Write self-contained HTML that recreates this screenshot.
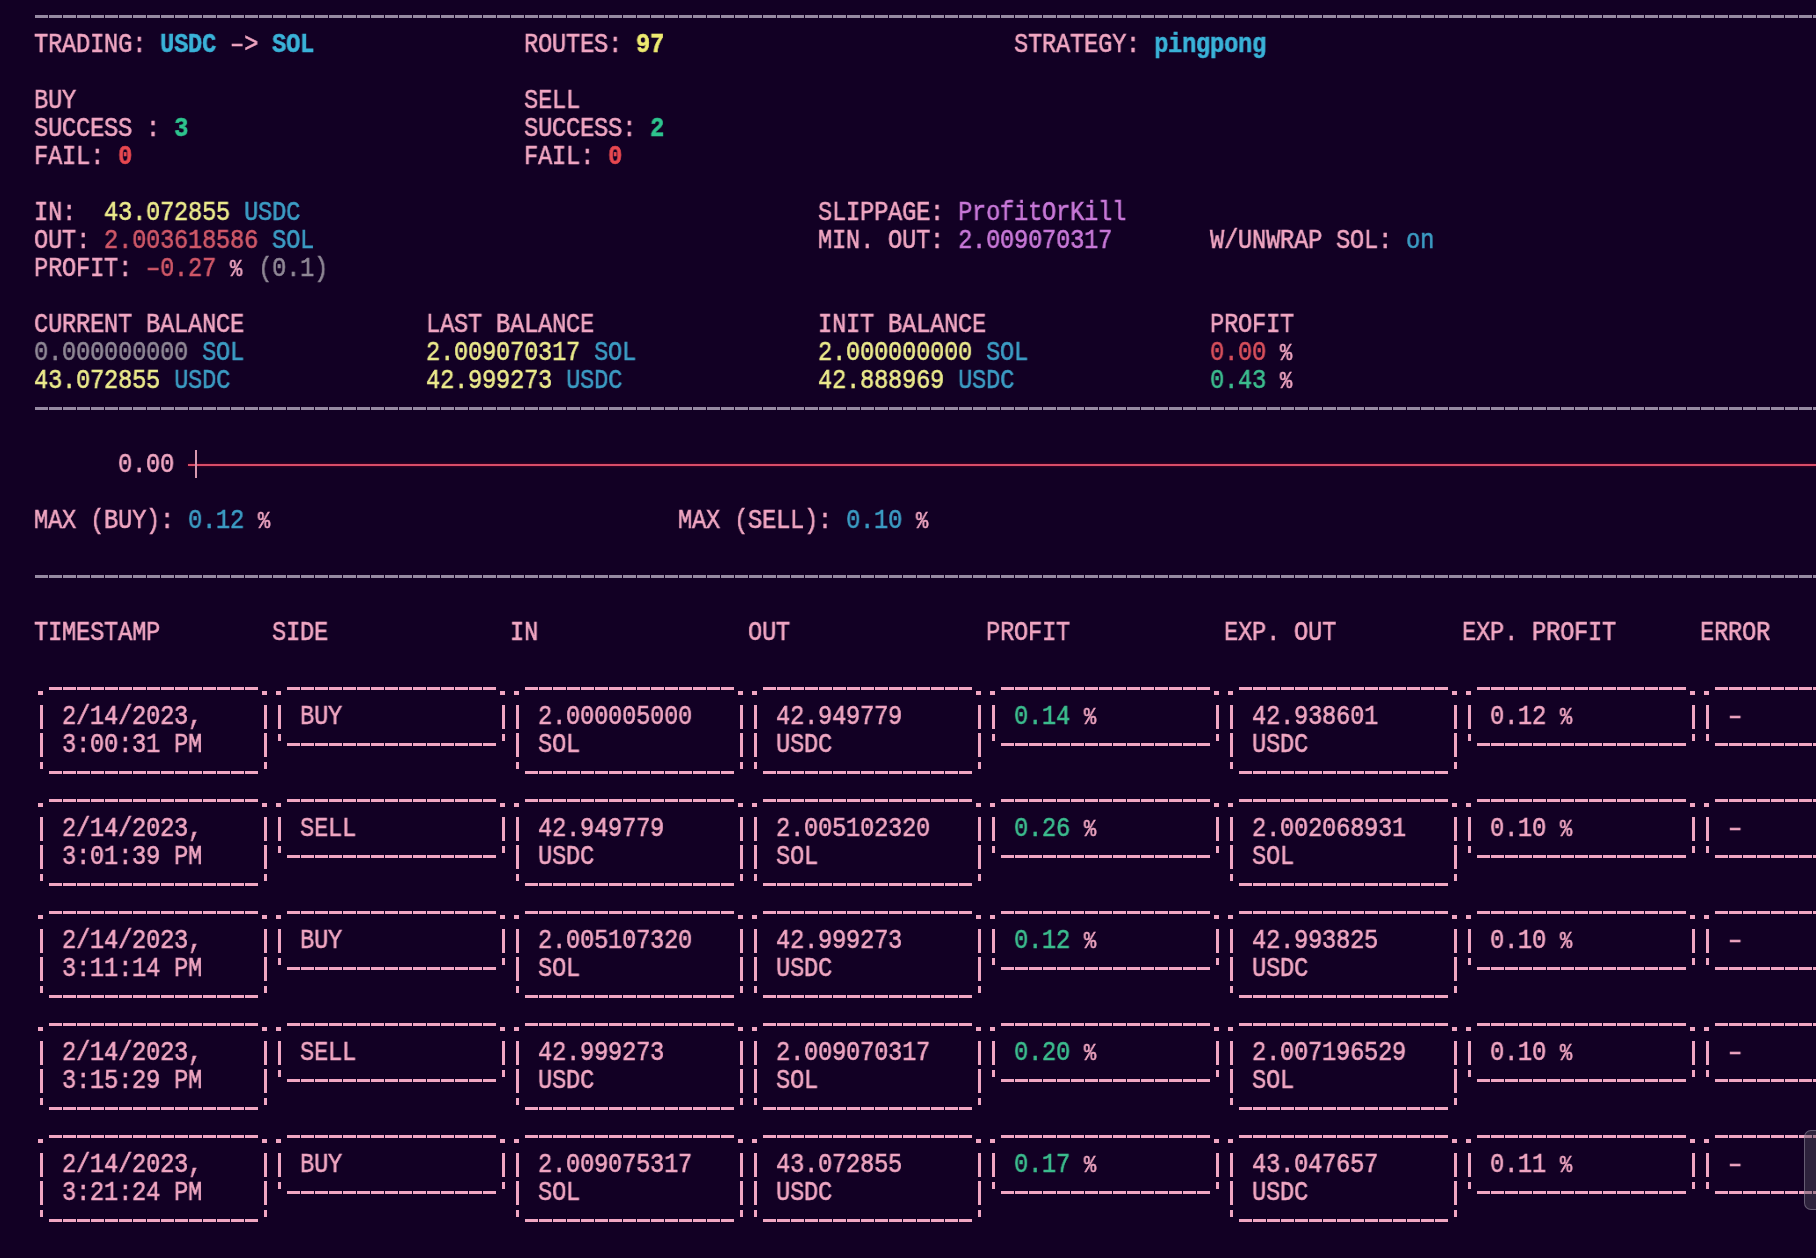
<!DOCTYPE html>
<html><head><meta charset="utf-8"><title>terminal</title><style>
html,body{margin:0;padding:0;}
body{width:1816px;height:1258px;overflow:hidden;position:relative;background:#120024;
 font-family:"Liberation Mono",monospace;font-size:27px;line-height:28px;color:#f0a6c2;
 --bx:#f0a6c2; --ln:#c0607a; --ax:#d898b0;}
.t{position:absolute;white-space:pre;letter-spacing:-0.291px;-webkit-text-stroke:0.55px currentColor;transform:scaleX(0.88);transform-origin:0 0;will-change:transform;}
.pc{font-size:23px;letter-spacing:2.109px;}
.rc{position:absolute;}
.d{position:absolute;height:3px;background-size:14px 3px;background-repeat:repeat-x;}
.pd{background-image:linear-gradient(90deg,#f0a6c2 0,#f0a6c2 13px,transparent 13px);}
.gd{background-image:linear-gradient(90deg,#968aa2 0,#968aa2 13px,transparent 13px);}
.p{color:#f0a6c2;}
.g{color:#968aa2;}
.cb{color:#3ab2d8;font-weight:bold;}
.b{color:#3c9cc4;}
.yb{color:#eeea70;font-weight:bold;}
.y{color:#ecea8c;}
.gb{color:#2ec48e;font-weight:bold;}
.gr{color:#3cbc8e;}
.rb{color:#e84850;font-weight:bold;}
.r{color:#d05868;}
.gy{color:#908896;}
.pu{color:#c878d8;}
.rb2{color:#d8505c;}
</style></head>
<body>
<div class="d gd" style="top:15px;left:35px;width:1792px"></div>
<div class="t" style="top:31.10px;left:33.90px">TRADING: <span class="cb">USDC</span> –&gt; <span class="cb">SOL</span></div>
<div class="t" style="top:31.10px;left:523.90px">ROUTES: <span class="yb">97</span></div>
<div class="t" style="top:31.10px;left:1013.90px">STRATEGY: <span class="cb">pingpong</span></div>
<div class="t" style="top:87.10px;left:33.90px">BUY</div>
<div class="t" style="top:87.10px;left:523.90px">SELL</div>
<div class="t" style="top:115.10px;left:33.90px">SUCCESS : <span class="gb">3</span></div>
<div class="t" style="top:115.10px;left:523.90px">SUCCESS: <span class="gb">2</span></div>
<div class="t" style="top:143.10px;left:33.90px">FAIL: <span class="rb">0</span></div>
<div class="t" style="top:143.10px;left:523.90px">FAIL: <span class="rb">0</span></div>
<div class="t" style="top:199.10px;left:33.90px">IN:  <span class="y">43.072855</span> <span class="b">USDC</span></div>
<div class="t" style="top:199.10px;left:817.90px">SLIPPAGE: <span class="pu">ProfitOrKill</span></div>
<div class="t" style="top:227.10px;left:33.90px">OUT: <span class="r">2.003618586</span> <span class="b">SOL</span></div>
<div class="t" style="top:227.10px;left:817.90px">MIN. OUT: <span class="pu">2.009070317</span></div>
<div class="t" style="top:227.10px;left:1209.90px">W/UNWRAP SOL: <span class="b">on</span></div>
<div class="t" style="top:255.10px;left:33.90px">PROFIT: <span class="r">–0.27</span> <span class="pc">%</span> <span class="gy">(0.1)</span></div>
<div class="t" style="top:311.10px;left:33.90px">CURRENT BALANCE</div>
<div class="t" style="top:311.10px;left:425.90px">LAST BALANCE</div>
<div class="t" style="top:311.10px;left:817.90px">INIT BALANCE</div>
<div class="t" style="top:311.10px;left:1209.90px">PROFIT</div>
<div class="t" style="top:339.10px;left:33.90px"><span class="gy">0.000000000</span> <span class="b">SOL</span></div>
<div class="t" style="top:339.10px;left:425.90px"><span class="y">2.009070317</span> <span class="b">SOL</span></div>
<div class="t" style="top:339.10px;left:817.90px"><span class="y">2.000000000</span> <span class="b">SOL</span></div>
<div class="t" style="top:339.10px;left:1209.90px"><span class="rb2">0.00</span> <span class="pc">%</span></div>
<div class="t" style="top:367.10px;left:33.90px"><span class="y">43.072855</span> <span class="b">USDC</span></div>
<div class="t" style="top:367.10px;left:425.90px"><span class="y">42.999273</span> <span class="b">USDC</span></div>
<div class="t" style="top:367.10px;left:817.90px"><span class="y">42.888969</span> <span class="b">USDC</span></div>
<div class="t" style="top:367.10px;left:1209.90px"><span class="gr">0.43</span> <span class="pc">%</span></div>
<div class="d gd" style="top:407px;left:35px;width:1792px"></div>
<div class="t" style="top:451.10px;left:117.90px">0.00</div>
<div class="rc" style="left:188px;top:464px;width:1628px;height:2px;background:#d84c68;box-shadow:0 0 3px rgba(160,0,30,0.6)"></div>
<div class="rc" style="left:194.5px;top:450px;width:2.5px;height:28px;background:var(--ax)"></div>
<div class="t" style="top:507.10px;left:33.90px">MAX (BUY): <span class="b">0.12</span> <span class="pc">%</span></div>
<div class="t" style="top:507.10px;left:677.90px">MAX (SELL): <span class="b">0.10</span> <span class="pc">%</span></div>
<div class="d gd" style="top:575px;left:35px;width:1792px"></div>
<div class="t" style="top:619.10px;left:33.90px">TIMESTAMP</div>
<div class="t" style="top:619.10px;left:271.90px">SIDE</div>
<div class="t" style="top:619.10px;left:509.90px">IN</div>
<div class="t" style="top:619.10px;left:747.90px">OUT</div>
<div class="t" style="top:619.10px;left:985.90px">PROFIT</div>
<div class="t" style="top:619.10px;left:1223.90px">EXP. OUT</div>
<div class="t" style="top:619.10px;left:1461.90px">EXP. PROFIT</div>
<div class="t" style="top:619.10px;left:1699.90px">ERROR</div>
<div class="d pd" style="top:687px;left:49px;width:210px"></div>
<div class="rc" style="left:38px;top:691px;width:5px;height:4px;background:var(--bx)"></div>
<div class="rc" style="left:262px;top:691px;width:5px;height:4px;background:var(--bx)"></div>
<div class="rc" style="left:40px;top:705px;width:3px;height:24px;background:var(--bx)"></div>
<div class="rc" style="left:264px;top:705px;width:3px;height:24px;background:var(--bx)"></div>
<div class="rc" style="left:40px;top:733px;width:3px;height:24px;background:var(--bx)"></div>
<div class="rc" style="left:264px;top:733px;width:3px;height:24px;background:var(--bx)"></div>
<div class="d pd" style="top:771px;left:49px;width:210px"></div>
<div class="rc" style="left:40px;top:762px;width:3px;height:7px;background:var(--bx)"></div>
<div class="rc" style="left:264px;top:762px;width:3px;height:7px;background:var(--bx)"></div>
<div class="t" style="top:703.10px;left:61.90px">2/14/2023,</div>
<div class="t" style="top:731.10px;left:61.90px">3:00:31 PM</div>
<div class="d pd" style="top:687px;left:287px;width:210px"></div>
<div class="rc" style="left:276px;top:691px;width:5px;height:4px;background:var(--bx)"></div>
<div class="rc" style="left:500px;top:691px;width:5px;height:4px;background:var(--bx)"></div>
<div class="rc" style="left:278px;top:705px;width:3px;height:24px;background:var(--bx)"></div>
<div class="rc" style="left:502px;top:705px;width:3px;height:24px;background:var(--bx)"></div>
<div class="d pd" style="top:743px;left:287px;width:210px"></div>
<div class="rc" style="left:278px;top:734px;width:3px;height:7px;background:var(--bx)"></div>
<div class="rc" style="left:502px;top:734px;width:3px;height:7px;background:var(--bx)"></div>
<div class="t" style="top:703.10px;left:299.90px">BUY</div>
<div class="d pd" style="top:687px;left:525px;width:210px"></div>
<div class="rc" style="left:514px;top:691px;width:5px;height:4px;background:var(--bx)"></div>
<div class="rc" style="left:738px;top:691px;width:5px;height:4px;background:var(--bx)"></div>
<div class="rc" style="left:516px;top:705px;width:3px;height:24px;background:var(--bx)"></div>
<div class="rc" style="left:740px;top:705px;width:3px;height:24px;background:var(--bx)"></div>
<div class="rc" style="left:516px;top:733px;width:3px;height:24px;background:var(--bx)"></div>
<div class="rc" style="left:740px;top:733px;width:3px;height:24px;background:var(--bx)"></div>
<div class="d pd" style="top:771px;left:525px;width:210px"></div>
<div class="rc" style="left:516px;top:762px;width:3px;height:7px;background:var(--bx)"></div>
<div class="rc" style="left:740px;top:762px;width:3px;height:7px;background:var(--bx)"></div>
<div class="t" style="top:703.10px;left:537.90px">2.000005000</div>
<div class="t" style="top:731.10px;left:537.90px">SOL</div>
<div class="d pd" style="top:687px;left:763px;width:210px"></div>
<div class="rc" style="left:752px;top:691px;width:5px;height:4px;background:var(--bx)"></div>
<div class="rc" style="left:976px;top:691px;width:5px;height:4px;background:var(--bx)"></div>
<div class="rc" style="left:754px;top:705px;width:3px;height:24px;background:var(--bx)"></div>
<div class="rc" style="left:978px;top:705px;width:3px;height:24px;background:var(--bx)"></div>
<div class="rc" style="left:754px;top:733px;width:3px;height:24px;background:var(--bx)"></div>
<div class="rc" style="left:978px;top:733px;width:3px;height:24px;background:var(--bx)"></div>
<div class="d pd" style="top:771px;left:763px;width:210px"></div>
<div class="rc" style="left:754px;top:762px;width:3px;height:7px;background:var(--bx)"></div>
<div class="rc" style="left:978px;top:762px;width:3px;height:7px;background:var(--bx)"></div>
<div class="t" style="top:703.10px;left:775.90px">42.949779</div>
<div class="t" style="top:731.10px;left:775.90px">USDC</div>
<div class="d pd" style="top:687px;left:1001px;width:210px"></div>
<div class="rc" style="left:990px;top:691px;width:5px;height:4px;background:var(--bx)"></div>
<div class="rc" style="left:1214px;top:691px;width:5px;height:4px;background:var(--bx)"></div>
<div class="rc" style="left:992px;top:705px;width:3px;height:24px;background:var(--bx)"></div>
<div class="rc" style="left:1216px;top:705px;width:3px;height:24px;background:var(--bx)"></div>
<div class="d pd" style="top:743px;left:1001px;width:210px"></div>
<div class="rc" style="left:992px;top:734px;width:3px;height:7px;background:var(--bx)"></div>
<div class="rc" style="left:1216px;top:734px;width:3px;height:7px;background:var(--bx)"></div>
<div class="t" style="top:703.10px;left:1013.90px"><span class="gr">0.14</span> <span class="pc">%</span></div>
<div class="d pd" style="top:687px;left:1239px;width:210px"></div>
<div class="rc" style="left:1228px;top:691px;width:5px;height:4px;background:var(--bx)"></div>
<div class="rc" style="left:1452px;top:691px;width:5px;height:4px;background:var(--bx)"></div>
<div class="rc" style="left:1230px;top:705px;width:3px;height:24px;background:var(--bx)"></div>
<div class="rc" style="left:1454px;top:705px;width:3px;height:24px;background:var(--bx)"></div>
<div class="rc" style="left:1230px;top:733px;width:3px;height:24px;background:var(--bx)"></div>
<div class="rc" style="left:1454px;top:733px;width:3px;height:24px;background:var(--bx)"></div>
<div class="d pd" style="top:771px;left:1239px;width:210px"></div>
<div class="rc" style="left:1230px;top:762px;width:3px;height:7px;background:var(--bx)"></div>
<div class="rc" style="left:1454px;top:762px;width:3px;height:7px;background:var(--bx)"></div>
<div class="t" style="top:703.10px;left:1251.90px">42.938601</div>
<div class="t" style="top:731.10px;left:1251.90px">USDC</div>
<div class="d pd" style="top:687px;left:1477px;width:210px"></div>
<div class="rc" style="left:1466px;top:691px;width:5px;height:4px;background:var(--bx)"></div>
<div class="rc" style="left:1690px;top:691px;width:5px;height:4px;background:var(--bx)"></div>
<div class="rc" style="left:1468px;top:705px;width:3px;height:24px;background:var(--bx)"></div>
<div class="rc" style="left:1692px;top:705px;width:3px;height:24px;background:var(--bx)"></div>
<div class="d pd" style="top:743px;left:1477px;width:210px"></div>
<div class="rc" style="left:1468px;top:734px;width:3px;height:7px;background:var(--bx)"></div>
<div class="rc" style="left:1692px;top:734px;width:3px;height:7px;background:var(--bx)"></div>
<div class="t" style="top:703.10px;left:1489.90px">0.12 <span class="pc">%</span></div>
<div class="d pd" style="top:687px;left:1715px;width:210px"></div>
<div class="rc" style="left:1704px;top:691px;width:5px;height:4px;background:var(--bx)"></div>
<div class="rc" style="left:1928px;top:691px;width:5px;height:4px;background:var(--bx)"></div>
<div class="rc" style="left:1706px;top:705px;width:3px;height:24px;background:var(--bx)"></div>
<div class="rc" style="left:1930px;top:705px;width:3px;height:24px;background:var(--bx)"></div>
<div class="d pd" style="top:743px;left:1715px;width:210px"></div>
<div class="rc" style="left:1706px;top:734px;width:3px;height:7px;background:var(--bx)"></div>
<div class="rc" style="left:1930px;top:734px;width:3px;height:7px;background:var(--bx)"></div>
<div class="t" style="top:703.10px;left:1727.90px">–</div>
<div class="d pd" style="top:799px;left:49px;width:210px"></div>
<div class="rc" style="left:38px;top:803px;width:5px;height:4px;background:var(--bx)"></div>
<div class="rc" style="left:262px;top:803px;width:5px;height:4px;background:var(--bx)"></div>
<div class="rc" style="left:40px;top:817px;width:3px;height:24px;background:var(--bx)"></div>
<div class="rc" style="left:264px;top:817px;width:3px;height:24px;background:var(--bx)"></div>
<div class="rc" style="left:40px;top:845px;width:3px;height:24px;background:var(--bx)"></div>
<div class="rc" style="left:264px;top:845px;width:3px;height:24px;background:var(--bx)"></div>
<div class="d pd" style="top:883px;left:49px;width:210px"></div>
<div class="rc" style="left:40px;top:874px;width:3px;height:7px;background:var(--bx)"></div>
<div class="rc" style="left:264px;top:874px;width:3px;height:7px;background:var(--bx)"></div>
<div class="t" style="top:815.10px;left:61.90px">2/14/2023,</div>
<div class="t" style="top:843.10px;left:61.90px">3:01:39 PM</div>
<div class="d pd" style="top:799px;left:287px;width:210px"></div>
<div class="rc" style="left:276px;top:803px;width:5px;height:4px;background:var(--bx)"></div>
<div class="rc" style="left:500px;top:803px;width:5px;height:4px;background:var(--bx)"></div>
<div class="rc" style="left:278px;top:817px;width:3px;height:24px;background:var(--bx)"></div>
<div class="rc" style="left:502px;top:817px;width:3px;height:24px;background:var(--bx)"></div>
<div class="d pd" style="top:855px;left:287px;width:210px"></div>
<div class="rc" style="left:278px;top:846px;width:3px;height:7px;background:var(--bx)"></div>
<div class="rc" style="left:502px;top:846px;width:3px;height:7px;background:var(--bx)"></div>
<div class="t" style="top:815.10px;left:299.90px">SELL</div>
<div class="d pd" style="top:799px;left:525px;width:210px"></div>
<div class="rc" style="left:514px;top:803px;width:5px;height:4px;background:var(--bx)"></div>
<div class="rc" style="left:738px;top:803px;width:5px;height:4px;background:var(--bx)"></div>
<div class="rc" style="left:516px;top:817px;width:3px;height:24px;background:var(--bx)"></div>
<div class="rc" style="left:740px;top:817px;width:3px;height:24px;background:var(--bx)"></div>
<div class="rc" style="left:516px;top:845px;width:3px;height:24px;background:var(--bx)"></div>
<div class="rc" style="left:740px;top:845px;width:3px;height:24px;background:var(--bx)"></div>
<div class="d pd" style="top:883px;left:525px;width:210px"></div>
<div class="rc" style="left:516px;top:874px;width:3px;height:7px;background:var(--bx)"></div>
<div class="rc" style="left:740px;top:874px;width:3px;height:7px;background:var(--bx)"></div>
<div class="t" style="top:815.10px;left:537.90px">42.949779</div>
<div class="t" style="top:843.10px;left:537.90px">USDC</div>
<div class="d pd" style="top:799px;left:763px;width:210px"></div>
<div class="rc" style="left:752px;top:803px;width:5px;height:4px;background:var(--bx)"></div>
<div class="rc" style="left:976px;top:803px;width:5px;height:4px;background:var(--bx)"></div>
<div class="rc" style="left:754px;top:817px;width:3px;height:24px;background:var(--bx)"></div>
<div class="rc" style="left:978px;top:817px;width:3px;height:24px;background:var(--bx)"></div>
<div class="rc" style="left:754px;top:845px;width:3px;height:24px;background:var(--bx)"></div>
<div class="rc" style="left:978px;top:845px;width:3px;height:24px;background:var(--bx)"></div>
<div class="d pd" style="top:883px;left:763px;width:210px"></div>
<div class="rc" style="left:754px;top:874px;width:3px;height:7px;background:var(--bx)"></div>
<div class="rc" style="left:978px;top:874px;width:3px;height:7px;background:var(--bx)"></div>
<div class="t" style="top:815.10px;left:775.90px">2.005102320</div>
<div class="t" style="top:843.10px;left:775.90px">SOL</div>
<div class="d pd" style="top:799px;left:1001px;width:210px"></div>
<div class="rc" style="left:990px;top:803px;width:5px;height:4px;background:var(--bx)"></div>
<div class="rc" style="left:1214px;top:803px;width:5px;height:4px;background:var(--bx)"></div>
<div class="rc" style="left:992px;top:817px;width:3px;height:24px;background:var(--bx)"></div>
<div class="rc" style="left:1216px;top:817px;width:3px;height:24px;background:var(--bx)"></div>
<div class="d pd" style="top:855px;left:1001px;width:210px"></div>
<div class="rc" style="left:992px;top:846px;width:3px;height:7px;background:var(--bx)"></div>
<div class="rc" style="left:1216px;top:846px;width:3px;height:7px;background:var(--bx)"></div>
<div class="t" style="top:815.10px;left:1013.90px"><span class="gr">0.26</span> <span class="pc">%</span></div>
<div class="d pd" style="top:799px;left:1239px;width:210px"></div>
<div class="rc" style="left:1228px;top:803px;width:5px;height:4px;background:var(--bx)"></div>
<div class="rc" style="left:1452px;top:803px;width:5px;height:4px;background:var(--bx)"></div>
<div class="rc" style="left:1230px;top:817px;width:3px;height:24px;background:var(--bx)"></div>
<div class="rc" style="left:1454px;top:817px;width:3px;height:24px;background:var(--bx)"></div>
<div class="rc" style="left:1230px;top:845px;width:3px;height:24px;background:var(--bx)"></div>
<div class="rc" style="left:1454px;top:845px;width:3px;height:24px;background:var(--bx)"></div>
<div class="d pd" style="top:883px;left:1239px;width:210px"></div>
<div class="rc" style="left:1230px;top:874px;width:3px;height:7px;background:var(--bx)"></div>
<div class="rc" style="left:1454px;top:874px;width:3px;height:7px;background:var(--bx)"></div>
<div class="t" style="top:815.10px;left:1251.90px">2.002068931</div>
<div class="t" style="top:843.10px;left:1251.90px">SOL</div>
<div class="d pd" style="top:799px;left:1477px;width:210px"></div>
<div class="rc" style="left:1466px;top:803px;width:5px;height:4px;background:var(--bx)"></div>
<div class="rc" style="left:1690px;top:803px;width:5px;height:4px;background:var(--bx)"></div>
<div class="rc" style="left:1468px;top:817px;width:3px;height:24px;background:var(--bx)"></div>
<div class="rc" style="left:1692px;top:817px;width:3px;height:24px;background:var(--bx)"></div>
<div class="d pd" style="top:855px;left:1477px;width:210px"></div>
<div class="rc" style="left:1468px;top:846px;width:3px;height:7px;background:var(--bx)"></div>
<div class="rc" style="left:1692px;top:846px;width:3px;height:7px;background:var(--bx)"></div>
<div class="t" style="top:815.10px;left:1489.90px">0.10 <span class="pc">%</span></div>
<div class="d pd" style="top:799px;left:1715px;width:210px"></div>
<div class="rc" style="left:1704px;top:803px;width:5px;height:4px;background:var(--bx)"></div>
<div class="rc" style="left:1928px;top:803px;width:5px;height:4px;background:var(--bx)"></div>
<div class="rc" style="left:1706px;top:817px;width:3px;height:24px;background:var(--bx)"></div>
<div class="rc" style="left:1930px;top:817px;width:3px;height:24px;background:var(--bx)"></div>
<div class="d pd" style="top:855px;left:1715px;width:210px"></div>
<div class="rc" style="left:1706px;top:846px;width:3px;height:7px;background:var(--bx)"></div>
<div class="rc" style="left:1930px;top:846px;width:3px;height:7px;background:var(--bx)"></div>
<div class="t" style="top:815.10px;left:1727.90px">–</div>
<div class="d pd" style="top:911px;left:49px;width:210px"></div>
<div class="rc" style="left:38px;top:915px;width:5px;height:4px;background:var(--bx)"></div>
<div class="rc" style="left:262px;top:915px;width:5px;height:4px;background:var(--bx)"></div>
<div class="rc" style="left:40px;top:929px;width:3px;height:24px;background:var(--bx)"></div>
<div class="rc" style="left:264px;top:929px;width:3px;height:24px;background:var(--bx)"></div>
<div class="rc" style="left:40px;top:957px;width:3px;height:24px;background:var(--bx)"></div>
<div class="rc" style="left:264px;top:957px;width:3px;height:24px;background:var(--bx)"></div>
<div class="d pd" style="top:995px;left:49px;width:210px"></div>
<div class="rc" style="left:40px;top:986px;width:3px;height:7px;background:var(--bx)"></div>
<div class="rc" style="left:264px;top:986px;width:3px;height:7px;background:var(--bx)"></div>
<div class="t" style="top:927.10px;left:61.90px">2/14/2023,</div>
<div class="t" style="top:955.10px;left:61.90px">3:11:14 PM</div>
<div class="d pd" style="top:911px;left:287px;width:210px"></div>
<div class="rc" style="left:276px;top:915px;width:5px;height:4px;background:var(--bx)"></div>
<div class="rc" style="left:500px;top:915px;width:5px;height:4px;background:var(--bx)"></div>
<div class="rc" style="left:278px;top:929px;width:3px;height:24px;background:var(--bx)"></div>
<div class="rc" style="left:502px;top:929px;width:3px;height:24px;background:var(--bx)"></div>
<div class="d pd" style="top:967px;left:287px;width:210px"></div>
<div class="rc" style="left:278px;top:958px;width:3px;height:7px;background:var(--bx)"></div>
<div class="rc" style="left:502px;top:958px;width:3px;height:7px;background:var(--bx)"></div>
<div class="t" style="top:927.10px;left:299.90px">BUY</div>
<div class="d pd" style="top:911px;left:525px;width:210px"></div>
<div class="rc" style="left:514px;top:915px;width:5px;height:4px;background:var(--bx)"></div>
<div class="rc" style="left:738px;top:915px;width:5px;height:4px;background:var(--bx)"></div>
<div class="rc" style="left:516px;top:929px;width:3px;height:24px;background:var(--bx)"></div>
<div class="rc" style="left:740px;top:929px;width:3px;height:24px;background:var(--bx)"></div>
<div class="rc" style="left:516px;top:957px;width:3px;height:24px;background:var(--bx)"></div>
<div class="rc" style="left:740px;top:957px;width:3px;height:24px;background:var(--bx)"></div>
<div class="d pd" style="top:995px;left:525px;width:210px"></div>
<div class="rc" style="left:516px;top:986px;width:3px;height:7px;background:var(--bx)"></div>
<div class="rc" style="left:740px;top:986px;width:3px;height:7px;background:var(--bx)"></div>
<div class="t" style="top:927.10px;left:537.90px">2.005107320</div>
<div class="t" style="top:955.10px;left:537.90px">SOL</div>
<div class="d pd" style="top:911px;left:763px;width:210px"></div>
<div class="rc" style="left:752px;top:915px;width:5px;height:4px;background:var(--bx)"></div>
<div class="rc" style="left:976px;top:915px;width:5px;height:4px;background:var(--bx)"></div>
<div class="rc" style="left:754px;top:929px;width:3px;height:24px;background:var(--bx)"></div>
<div class="rc" style="left:978px;top:929px;width:3px;height:24px;background:var(--bx)"></div>
<div class="rc" style="left:754px;top:957px;width:3px;height:24px;background:var(--bx)"></div>
<div class="rc" style="left:978px;top:957px;width:3px;height:24px;background:var(--bx)"></div>
<div class="d pd" style="top:995px;left:763px;width:210px"></div>
<div class="rc" style="left:754px;top:986px;width:3px;height:7px;background:var(--bx)"></div>
<div class="rc" style="left:978px;top:986px;width:3px;height:7px;background:var(--bx)"></div>
<div class="t" style="top:927.10px;left:775.90px">42.999273</div>
<div class="t" style="top:955.10px;left:775.90px">USDC</div>
<div class="d pd" style="top:911px;left:1001px;width:210px"></div>
<div class="rc" style="left:990px;top:915px;width:5px;height:4px;background:var(--bx)"></div>
<div class="rc" style="left:1214px;top:915px;width:5px;height:4px;background:var(--bx)"></div>
<div class="rc" style="left:992px;top:929px;width:3px;height:24px;background:var(--bx)"></div>
<div class="rc" style="left:1216px;top:929px;width:3px;height:24px;background:var(--bx)"></div>
<div class="d pd" style="top:967px;left:1001px;width:210px"></div>
<div class="rc" style="left:992px;top:958px;width:3px;height:7px;background:var(--bx)"></div>
<div class="rc" style="left:1216px;top:958px;width:3px;height:7px;background:var(--bx)"></div>
<div class="t" style="top:927.10px;left:1013.90px"><span class="gr">0.12</span> <span class="pc">%</span></div>
<div class="d pd" style="top:911px;left:1239px;width:210px"></div>
<div class="rc" style="left:1228px;top:915px;width:5px;height:4px;background:var(--bx)"></div>
<div class="rc" style="left:1452px;top:915px;width:5px;height:4px;background:var(--bx)"></div>
<div class="rc" style="left:1230px;top:929px;width:3px;height:24px;background:var(--bx)"></div>
<div class="rc" style="left:1454px;top:929px;width:3px;height:24px;background:var(--bx)"></div>
<div class="rc" style="left:1230px;top:957px;width:3px;height:24px;background:var(--bx)"></div>
<div class="rc" style="left:1454px;top:957px;width:3px;height:24px;background:var(--bx)"></div>
<div class="d pd" style="top:995px;left:1239px;width:210px"></div>
<div class="rc" style="left:1230px;top:986px;width:3px;height:7px;background:var(--bx)"></div>
<div class="rc" style="left:1454px;top:986px;width:3px;height:7px;background:var(--bx)"></div>
<div class="t" style="top:927.10px;left:1251.90px">42.993825</div>
<div class="t" style="top:955.10px;left:1251.90px">USDC</div>
<div class="d pd" style="top:911px;left:1477px;width:210px"></div>
<div class="rc" style="left:1466px;top:915px;width:5px;height:4px;background:var(--bx)"></div>
<div class="rc" style="left:1690px;top:915px;width:5px;height:4px;background:var(--bx)"></div>
<div class="rc" style="left:1468px;top:929px;width:3px;height:24px;background:var(--bx)"></div>
<div class="rc" style="left:1692px;top:929px;width:3px;height:24px;background:var(--bx)"></div>
<div class="d pd" style="top:967px;left:1477px;width:210px"></div>
<div class="rc" style="left:1468px;top:958px;width:3px;height:7px;background:var(--bx)"></div>
<div class="rc" style="left:1692px;top:958px;width:3px;height:7px;background:var(--bx)"></div>
<div class="t" style="top:927.10px;left:1489.90px">0.10 <span class="pc">%</span></div>
<div class="d pd" style="top:911px;left:1715px;width:210px"></div>
<div class="rc" style="left:1704px;top:915px;width:5px;height:4px;background:var(--bx)"></div>
<div class="rc" style="left:1928px;top:915px;width:5px;height:4px;background:var(--bx)"></div>
<div class="rc" style="left:1706px;top:929px;width:3px;height:24px;background:var(--bx)"></div>
<div class="rc" style="left:1930px;top:929px;width:3px;height:24px;background:var(--bx)"></div>
<div class="d pd" style="top:967px;left:1715px;width:210px"></div>
<div class="rc" style="left:1706px;top:958px;width:3px;height:7px;background:var(--bx)"></div>
<div class="rc" style="left:1930px;top:958px;width:3px;height:7px;background:var(--bx)"></div>
<div class="t" style="top:927.10px;left:1727.90px">–</div>
<div class="d pd" style="top:1023px;left:49px;width:210px"></div>
<div class="rc" style="left:38px;top:1027px;width:5px;height:4px;background:var(--bx)"></div>
<div class="rc" style="left:262px;top:1027px;width:5px;height:4px;background:var(--bx)"></div>
<div class="rc" style="left:40px;top:1041px;width:3px;height:24px;background:var(--bx)"></div>
<div class="rc" style="left:264px;top:1041px;width:3px;height:24px;background:var(--bx)"></div>
<div class="rc" style="left:40px;top:1069px;width:3px;height:24px;background:var(--bx)"></div>
<div class="rc" style="left:264px;top:1069px;width:3px;height:24px;background:var(--bx)"></div>
<div class="d pd" style="top:1107px;left:49px;width:210px"></div>
<div class="rc" style="left:40px;top:1098px;width:3px;height:7px;background:var(--bx)"></div>
<div class="rc" style="left:264px;top:1098px;width:3px;height:7px;background:var(--bx)"></div>
<div class="t" style="top:1039.10px;left:61.90px">2/14/2023,</div>
<div class="t" style="top:1067.10px;left:61.90px">3:15:29 PM</div>
<div class="d pd" style="top:1023px;left:287px;width:210px"></div>
<div class="rc" style="left:276px;top:1027px;width:5px;height:4px;background:var(--bx)"></div>
<div class="rc" style="left:500px;top:1027px;width:5px;height:4px;background:var(--bx)"></div>
<div class="rc" style="left:278px;top:1041px;width:3px;height:24px;background:var(--bx)"></div>
<div class="rc" style="left:502px;top:1041px;width:3px;height:24px;background:var(--bx)"></div>
<div class="d pd" style="top:1079px;left:287px;width:210px"></div>
<div class="rc" style="left:278px;top:1070px;width:3px;height:7px;background:var(--bx)"></div>
<div class="rc" style="left:502px;top:1070px;width:3px;height:7px;background:var(--bx)"></div>
<div class="t" style="top:1039.10px;left:299.90px">SELL</div>
<div class="d pd" style="top:1023px;left:525px;width:210px"></div>
<div class="rc" style="left:514px;top:1027px;width:5px;height:4px;background:var(--bx)"></div>
<div class="rc" style="left:738px;top:1027px;width:5px;height:4px;background:var(--bx)"></div>
<div class="rc" style="left:516px;top:1041px;width:3px;height:24px;background:var(--bx)"></div>
<div class="rc" style="left:740px;top:1041px;width:3px;height:24px;background:var(--bx)"></div>
<div class="rc" style="left:516px;top:1069px;width:3px;height:24px;background:var(--bx)"></div>
<div class="rc" style="left:740px;top:1069px;width:3px;height:24px;background:var(--bx)"></div>
<div class="d pd" style="top:1107px;left:525px;width:210px"></div>
<div class="rc" style="left:516px;top:1098px;width:3px;height:7px;background:var(--bx)"></div>
<div class="rc" style="left:740px;top:1098px;width:3px;height:7px;background:var(--bx)"></div>
<div class="t" style="top:1039.10px;left:537.90px">42.999273</div>
<div class="t" style="top:1067.10px;left:537.90px">USDC</div>
<div class="d pd" style="top:1023px;left:763px;width:210px"></div>
<div class="rc" style="left:752px;top:1027px;width:5px;height:4px;background:var(--bx)"></div>
<div class="rc" style="left:976px;top:1027px;width:5px;height:4px;background:var(--bx)"></div>
<div class="rc" style="left:754px;top:1041px;width:3px;height:24px;background:var(--bx)"></div>
<div class="rc" style="left:978px;top:1041px;width:3px;height:24px;background:var(--bx)"></div>
<div class="rc" style="left:754px;top:1069px;width:3px;height:24px;background:var(--bx)"></div>
<div class="rc" style="left:978px;top:1069px;width:3px;height:24px;background:var(--bx)"></div>
<div class="d pd" style="top:1107px;left:763px;width:210px"></div>
<div class="rc" style="left:754px;top:1098px;width:3px;height:7px;background:var(--bx)"></div>
<div class="rc" style="left:978px;top:1098px;width:3px;height:7px;background:var(--bx)"></div>
<div class="t" style="top:1039.10px;left:775.90px">2.009070317</div>
<div class="t" style="top:1067.10px;left:775.90px">SOL</div>
<div class="d pd" style="top:1023px;left:1001px;width:210px"></div>
<div class="rc" style="left:990px;top:1027px;width:5px;height:4px;background:var(--bx)"></div>
<div class="rc" style="left:1214px;top:1027px;width:5px;height:4px;background:var(--bx)"></div>
<div class="rc" style="left:992px;top:1041px;width:3px;height:24px;background:var(--bx)"></div>
<div class="rc" style="left:1216px;top:1041px;width:3px;height:24px;background:var(--bx)"></div>
<div class="d pd" style="top:1079px;left:1001px;width:210px"></div>
<div class="rc" style="left:992px;top:1070px;width:3px;height:7px;background:var(--bx)"></div>
<div class="rc" style="left:1216px;top:1070px;width:3px;height:7px;background:var(--bx)"></div>
<div class="t" style="top:1039.10px;left:1013.90px"><span class="gr">0.20</span> <span class="pc">%</span></div>
<div class="d pd" style="top:1023px;left:1239px;width:210px"></div>
<div class="rc" style="left:1228px;top:1027px;width:5px;height:4px;background:var(--bx)"></div>
<div class="rc" style="left:1452px;top:1027px;width:5px;height:4px;background:var(--bx)"></div>
<div class="rc" style="left:1230px;top:1041px;width:3px;height:24px;background:var(--bx)"></div>
<div class="rc" style="left:1454px;top:1041px;width:3px;height:24px;background:var(--bx)"></div>
<div class="rc" style="left:1230px;top:1069px;width:3px;height:24px;background:var(--bx)"></div>
<div class="rc" style="left:1454px;top:1069px;width:3px;height:24px;background:var(--bx)"></div>
<div class="d pd" style="top:1107px;left:1239px;width:210px"></div>
<div class="rc" style="left:1230px;top:1098px;width:3px;height:7px;background:var(--bx)"></div>
<div class="rc" style="left:1454px;top:1098px;width:3px;height:7px;background:var(--bx)"></div>
<div class="t" style="top:1039.10px;left:1251.90px">2.007196529</div>
<div class="t" style="top:1067.10px;left:1251.90px">SOL</div>
<div class="d pd" style="top:1023px;left:1477px;width:210px"></div>
<div class="rc" style="left:1466px;top:1027px;width:5px;height:4px;background:var(--bx)"></div>
<div class="rc" style="left:1690px;top:1027px;width:5px;height:4px;background:var(--bx)"></div>
<div class="rc" style="left:1468px;top:1041px;width:3px;height:24px;background:var(--bx)"></div>
<div class="rc" style="left:1692px;top:1041px;width:3px;height:24px;background:var(--bx)"></div>
<div class="d pd" style="top:1079px;left:1477px;width:210px"></div>
<div class="rc" style="left:1468px;top:1070px;width:3px;height:7px;background:var(--bx)"></div>
<div class="rc" style="left:1692px;top:1070px;width:3px;height:7px;background:var(--bx)"></div>
<div class="t" style="top:1039.10px;left:1489.90px">0.10 <span class="pc">%</span></div>
<div class="d pd" style="top:1023px;left:1715px;width:210px"></div>
<div class="rc" style="left:1704px;top:1027px;width:5px;height:4px;background:var(--bx)"></div>
<div class="rc" style="left:1928px;top:1027px;width:5px;height:4px;background:var(--bx)"></div>
<div class="rc" style="left:1706px;top:1041px;width:3px;height:24px;background:var(--bx)"></div>
<div class="rc" style="left:1930px;top:1041px;width:3px;height:24px;background:var(--bx)"></div>
<div class="d pd" style="top:1079px;left:1715px;width:210px"></div>
<div class="rc" style="left:1706px;top:1070px;width:3px;height:7px;background:var(--bx)"></div>
<div class="rc" style="left:1930px;top:1070px;width:3px;height:7px;background:var(--bx)"></div>
<div class="t" style="top:1039.10px;left:1727.90px">–</div>
<div class="d pd" style="top:1135px;left:49px;width:210px"></div>
<div class="rc" style="left:38px;top:1139px;width:5px;height:4px;background:var(--bx)"></div>
<div class="rc" style="left:262px;top:1139px;width:5px;height:4px;background:var(--bx)"></div>
<div class="rc" style="left:40px;top:1153px;width:3px;height:24px;background:var(--bx)"></div>
<div class="rc" style="left:264px;top:1153px;width:3px;height:24px;background:var(--bx)"></div>
<div class="rc" style="left:40px;top:1181px;width:3px;height:24px;background:var(--bx)"></div>
<div class="rc" style="left:264px;top:1181px;width:3px;height:24px;background:var(--bx)"></div>
<div class="d pd" style="top:1219px;left:49px;width:210px"></div>
<div class="rc" style="left:40px;top:1210px;width:3px;height:7px;background:var(--bx)"></div>
<div class="rc" style="left:264px;top:1210px;width:3px;height:7px;background:var(--bx)"></div>
<div class="t" style="top:1151.10px;left:61.90px">2/14/2023,</div>
<div class="t" style="top:1179.10px;left:61.90px">3:21:24 PM</div>
<div class="d pd" style="top:1135px;left:287px;width:210px"></div>
<div class="rc" style="left:276px;top:1139px;width:5px;height:4px;background:var(--bx)"></div>
<div class="rc" style="left:500px;top:1139px;width:5px;height:4px;background:var(--bx)"></div>
<div class="rc" style="left:278px;top:1153px;width:3px;height:24px;background:var(--bx)"></div>
<div class="rc" style="left:502px;top:1153px;width:3px;height:24px;background:var(--bx)"></div>
<div class="d pd" style="top:1191px;left:287px;width:210px"></div>
<div class="rc" style="left:278px;top:1182px;width:3px;height:7px;background:var(--bx)"></div>
<div class="rc" style="left:502px;top:1182px;width:3px;height:7px;background:var(--bx)"></div>
<div class="t" style="top:1151.10px;left:299.90px">BUY</div>
<div class="d pd" style="top:1135px;left:525px;width:210px"></div>
<div class="rc" style="left:514px;top:1139px;width:5px;height:4px;background:var(--bx)"></div>
<div class="rc" style="left:738px;top:1139px;width:5px;height:4px;background:var(--bx)"></div>
<div class="rc" style="left:516px;top:1153px;width:3px;height:24px;background:var(--bx)"></div>
<div class="rc" style="left:740px;top:1153px;width:3px;height:24px;background:var(--bx)"></div>
<div class="rc" style="left:516px;top:1181px;width:3px;height:24px;background:var(--bx)"></div>
<div class="rc" style="left:740px;top:1181px;width:3px;height:24px;background:var(--bx)"></div>
<div class="d pd" style="top:1219px;left:525px;width:210px"></div>
<div class="rc" style="left:516px;top:1210px;width:3px;height:7px;background:var(--bx)"></div>
<div class="rc" style="left:740px;top:1210px;width:3px;height:7px;background:var(--bx)"></div>
<div class="t" style="top:1151.10px;left:537.90px">2.009075317</div>
<div class="t" style="top:1179.10px;left:537.90px">SOL</div>
<div class="d pd" style="top:1135px;left:763px;width:210px"></div>
<div class="rc" style="left:752px;top:1139px;width:5px;height:4px;background:var(--bx)"></div>
<div class="rc" style="left:976px;top:1139px;width:5px;height:4px;background:var(--bx)"></div>
<div class="rc" style="left:754px;top:1153px;width:3px;height:24px;background:var(--bx)"></div>
<div class="rc" style="left:978px;top:1153px;width:3px;height:24px;background:var(--bx)"></div>
<div class="rc" style="left:754px;top:1181px;width:3px;height:24px;background:var(--bx)"></div>
<div class="rc" style="left:978px;top:1181px;width:3px;height:24px;background:var(--bx)"></div>
<div class="d pd" style="top:1219px;left:763px;width:210px"></div>
<div class="rc" style="left:754px;top:1210px;width:3px;height:7px;background:var(--bx)"></div>
<div class="rc" style="left:978px;top:1210px;width:3px;height:7px;background:var(--bx)"></div>
<div class="t" style="top:1151.10px;left:775.90px">43.072855</div>
<div class="t" style="top:1179.10px;left:775.90px">USDC</div>
<div class="d pd" style="top:1135px;left:1001px;width:210px"></div>
<div class="rc" style="left:990px;top:1139px;width:5px;height:4px;background:var(--bx)"></div>
<div class="rc" style="left:1214px;top:1139px;width:5px;height:4px;background:var(--bx)"></div>
<div class="rc" style="left:992px;top:1153px;width:3px;height:24px;background:var(--bx)"></div>
<div class="rc" style="left:1216px;top:1153px;width:3px;height:24px;background:var(--bx)"></div>
<div class="d pd" style="top:1191px;left:1001px;width:210px"></div>
<div class="rc" style="left:992px;top:1182px;width:3px;height:7px;background:var(--bx)"></div>
<div class="rc" style="left:1216px;top:1182px;width:3px;height:7px;background:var(--bx)"></div>
<div class="t" style="top:1151.10px;left:1013.90px"><span class="gr">0.17</span> <span class="pc">%</span></div>
<div class="d pd" style="top:1135px;left:1239px;width:210px"></div>
<div class="rc" style="left:1228px;top:1139px;width:5px;height:4px;background:var(--bx)"></div>
<div class="rc" style="left:1452px;top:1139px;width:5px;height:4px;background:var(--bx)"></div>
<div class="rc" style="left:1230px;top:1153px;width:3px;height:24px;background:var(--bx)"></div>
<div class="rc" style="left:1454px;top:1153px;width:3px;height:24px;background:var(--bx)"></div>
<div class="rc" style="left:1230px;top:1181px;width:3px;height:24px;background:var(--bx)"></div>
<div class="rc" style="left:1454px;top:1181px;width:3px;height:24px;background:var(--bx)"></div>
<div class="d pd" style="top:1219px;left:1239px;width:210px"></div>
<div class="rc" style="left:1230px;top:1210px;width:3px;height:7px;background:var(--bx)"></div>
<div class="rc" style="left:1454px;top:1210px;width:3px;height:7px;background:var(--bx)"></div>
<div class="t" style="top:1151.10px;left:1251.90px">43.047657</div>
<div class="t" style="top:1179.10px;left:1251.90px">USDC</div>
<div class="d pd" style="top:1135px;left:1477px;width:210px"></div>
<div class="rc" style="left:1466px;top:1139px;width:5px;height:4px;background:var(--bx)"></div>
<div class="rc" style="left:1690px;top:1139px;width:5px;height:4px;background:var(--bx)"></div>
<div class="rc" style="left:1468px;top:1153px;width:3px;height:24px;background:var(--bx)"></div>
<div class="rc" style="left:1692px;top:1153px;width:3px;height:24px;background:var(--bx)"></div>
<div class="d pd" style="top:1191px;left:1477px;width:210px"></div>
<div class="rc" style="left:1468px;top:1182px;width:3px;height:7px;background:var(--bx)"></div>
<div class="rc" style="left:1692px;top:1182px;width:3px;height:7px;background:var(--bx)"></div>
<div class="t" style="top:1151.10px;left:1489.90px">0.11 <span class="pc">%</span></div>
<div class="d pd" style="top:1135px;left:1715px;width:210px"></div>
<div class="rc" style="left:1704px;top:1139px;width:5px;height:4px;background:var(--bx)"></div>
<div class="rc" style="left:1928px;top:1139px;width:5px;height:4px;background:var(--bx)"></div>
<div class="rc" style="left:1706px;top:1153px;width:3px;height:24px;background:var(--bx)"></div>
<div class="rc" style="left:1930px;top:1153px;width:3px;height:24px;background:var(--bx)"></div>
<div class="d pd" style="top:1191px;left:1715px;width:210px"></div>
<div class="rc" style="left:1706px;top:1182px;width:3px;height:7px;background:var(--bx)"></div>
<div class="rc" style="left:1930px;top:1182px;width:3px;height:7px;background:var(--bx)"></div>
<div class="t" style="top:1151.10px;left:1727.90px">–</div>
<div class="rc" style="left:1804px;top:1130px;width:20px;height:78px;border-radius:7px;border:1px solid rgba(150,140,160,0.55);background:rgba(80,76,90,0.45);"></div>
</body></html>
